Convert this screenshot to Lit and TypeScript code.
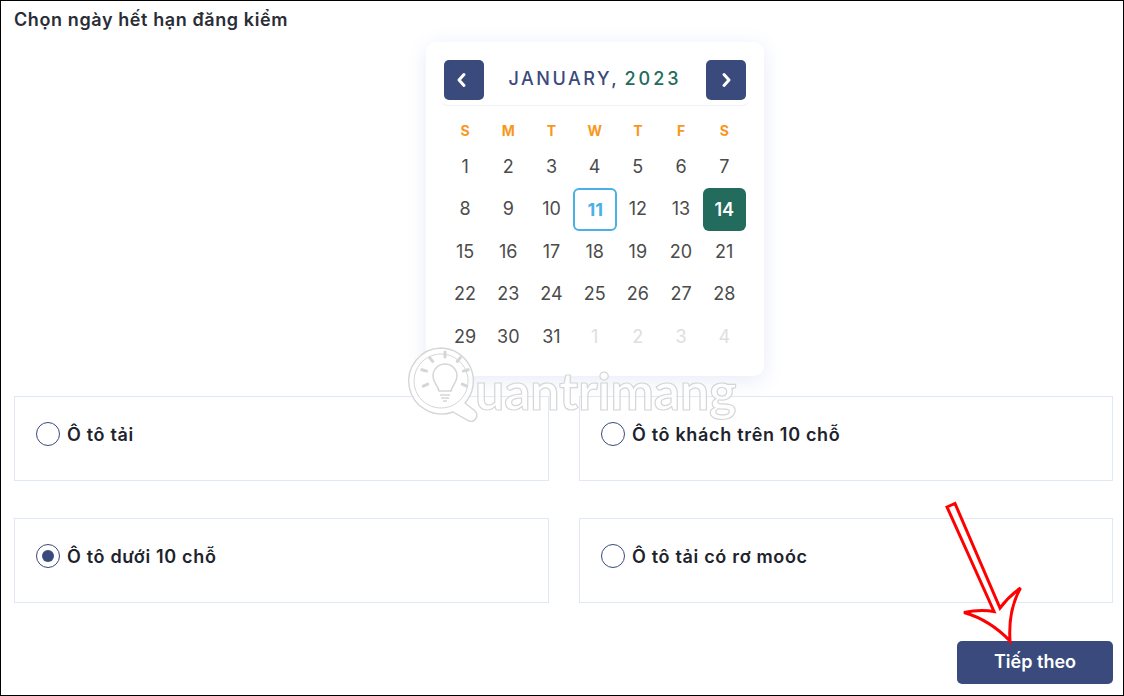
import { LitElement, html, css, svg } from "lit";
import { customElement } from "lit/decorators.js";

const WEEK = ["S", "M", "T", "W", "T", "F", "S"];
const DAYS: [number, string][] = [
  ...Array.from({ length: 31 }, (_, i) => [i + 1, ""] as [number, string]),
  [1, "off"], [2, "off"], [3, "off"], [4, "off"],
];
DAYS[10][1] = "today";
DAYS[13][1] = "sel";

const OPTIONS = [
  { label: "Ô tô tải", on: false },
  { label: "Ô tô khách trên 10 chỗ", on: false },
  { label: "Ô tô dưới 10 chỗ", on: true },
  { label: "Ô tô tải có rơ moóc", on: false },
];

@customElement("app-root")
export class AppRoot extends LitElement {
  static styles = css`
    :host {
      display: block;
      position: relative;
      width: 1124px;
      height: 696px;
      box-sizing: border-box;
      border: 1px solid #000;
      background: #fff;
      overflow: hidden;
      font-family: "Inter", "Noto Sans", sans-serif;
      color: #22262f;
    }
    .page {
      display: flex;
      flex-direction: column;
      height: 100%;
      box-sizing: border-box;
      padding: 8px 10px 11px 13px;
    }
    h1 {
      margin: 0;
      font-size: 18px;
      line-height: 22px;
      font-weight: 600;
      letter-spacing: 0.6px;
      color: #2a2d36;
    }
    .card {
      align-self: flex-start;
      margin: 11px 0 0 412px;
      width: 338px;
      height: 334px;
      box-sizing: border-box;
      padding: 18px;
      background: #fff;
      border-radius: 10px;
      box-shadow: 0 4px 20px rgba(70, 100, 210, 0.13);
    }
    .head {
      display: flex;
      align-items: center;
      justify-content: space-between;
      height: 46px;
      padding: 0 4px 6px;
      box-sizing: border-box;
      margin: 0 -4px;
      border-bottom: 1px solid #f0f1f4;
      border-radius: 0 0 8px 8px;
    }
    .nav {
      width: 40px;
      height: 40px;
      border-radius: 5px;
      background: #3a4a7d;
      display: flex;
      align-items: center;
      justify-content: center;
    }
    .month {
      font-size: 18px;
      font-weight: 500;
      letter-spacing: 2.55px;
      color: #3a4a7d;
      margin-top: -3px;
    }
    .year {
      color: #236b5c;
      letter-spacing: 3px;
      margin-left: -2px;
    }
    .grid {
      display: grid;
      grid-template-columns: repeat(7, 43.2px);
      grid-auto-rows: 42.5px;
      margin-left: -0.5px;
    }
    .week {
      display: grid;
      grid-template-columns: repeat(7, 43.2px);
      height: 39px;
      align-items: center;
      padding-top: 10px;
      box-sizing: border-box;
      margin-left: -0.5px;
      text-align: center;
      font-size: 14px;
      font-weight: 700;
      color: #f7981d;
    }
    .day {
      display: flex;
      align-items: center;
      justify-content: center;
      font-size: 18px;
      color: #4b4b4b;
      box-sizing: border-box;
      border-radius: 6px;
    }
    .off {
      color: #dedede;
    }
    .today {
      border: 2px solid #4bb0e6;
      color: #4bb0e6;
      font-weight: 700;
      margin: 0 -1px -1px 0;
    }
    .sel {
      background: #236b5c;
      color: #fff;
      font-weight: 600;
      margin-bottom: -1px;
    }
    .options {
      display: grid;
      grid-template-columns: 535px 534px;
      column-gap: 30px;
      row-gap: 37px;
      margin-top: 20px;
    }
    .opt {
      height: 85px;
      box-sizing: border-box;
      border: 1px solid #dfe8f3;
      display: flex;
      align-items: center;
      gap: 7px;
      padding: 0 0 9px 21px;
      font-size: 18px;
      font-weight: 600;
      letter-spacing: 0.68px;
      color: #20232c;
    }
    .radio {
      width: 24px;
      height: 24px;
      flex: none;
      box-sizing: border-box;
      border: 1px solid #3a4a7d;
      border-radius: 50%;
      display: flex;
      align-items: center;
      justify-content: center;
    }
    .dot {
      width: 12px;
      height: 12px;
      border-radius: 50%;
      background: #3a4a7d;
    }
    .actions {
      display: flex;
      justify-content: flex-end;
      margin-top: 38px;
    }
    .next {
      width: 156px;
      height: 43px;
      box-sizing: border-box;
      padding-bottom: 2px;
      border-radius: 5px;
      background: #3a4a7d;
      color: #fff;
      display: flex;
      align-items: center;
      justify-content: center;
      font-size: 18px;
      font-weight: 600;
    }
    .mark {
      position: absolute;
      left: 0;
      top: 0;
      pointer-events: none;
    }
    .wm {
      position: absolute;
      left: 474px;
      top: 349px;
      font-family: "Lato", "Noto Sans", sans-serif;
      font-size: 52px;
      font-weight: 700;
      line-height: 80px;
      letter-spacing: -0.2px;
      color: rgba(255, 255, 255, 0.75);
      -webkit-text-stroke: 1.2px #d6d6d6;
      pointer-events: none;
    }
  `;

  private chevron(left: boolean) {
    const d = left ? "M9 4.5 L4 10 L9 15.5" : "M7 4.5 L12 10 L7 15.5";
    return html`<svg width="18" height="19" viewBox="0 0 18 19" fill="none" stroke="#fff" stroke-width="3" stroke-linecap="round" stroke-linejoin="round"><path d=${d}></path></svg>`;
  }

  private watermarkBulb() {
    const rays = [-90, -50, -15, 25, 155, 195, 230].map((a) => {
      const r = (a * Math.PI) / 180;
      const x1 = 445 + Math.cos(r) * 19, y1 = 376 + Math.sin(r) * 19;
      const x2 = 445 + Math.cos(r) * 24, y2 = 376 + Math.sin(r) * 24;
      return svg`<line x1=${x1} y1=${y1} x2=${x2} y2=${y2} stroke-width="3" stroke-linecap="round"></line>`;
    });
    return html`<svg class="mark" width="1122" height="694" viewBox="1 1 1122 694" fill="none" stroke="#d6d6d6">
      <path d="M441 348 a33 33 0 1 0 12 64 l16 9 a6 6 0 0 0 6 -10 l-10 -8 a33 33 0 0 0 -24 -55 Z" fill="rgba(255,255,255,.75)" stroke-width="1.4"></path>
      <path d="M441 354 a27 27 0 1 0 0.1 0 Z" fill="#fff" stroke-width="1"></path>
      ${rays}
      <path d="M439 391 c-1 -6 -6 -8 -6 -15 a12 12 0 0 1 24 0 c0 7 -5 9 -6 15 Z" stroke-width="1.6"></path>
      <path d="M440 395 h10 M441 398 h8 M443 401 h4" stroke-width="1.6"></path>
    </svg>`;
  }

  render() {
    return html`
      <div class="page">
        <h1>Chọn ngày hết hạn đăng kiểm</h1>
        <div class="card">
          <div class="head">
            <div class="nav">${this.chevron(true)}</div>
            <div class="month">JANUARY, <span class="year">2023</span></div>
            <div class="nav">${this.chevron(false)}</div>
          </div>
          <div class="week">${WEEK.map((w) => html`<div>${w}</div>`)}</div>
          <div class="grid">
            ${DAYS.map(([n, c]) => html`<div class="day ${c}">${n}</div>`)}
          </div>
        </div>
        <div class="options">
          ${OPTIONS.map(
            (o) => html`<div class="opt">
              <span class="radio">${o.on ? html`<span class="dot"></span>` : ""}</span>
              <span>${o.label}</span>
            </div>`
          )}
        </div>
        <div class="actions"><div class="next">Tiếp theo</div></div>
      </div>
      ${this.watermarkBulb()}
      <div class="wm">uantrimang</div>
      <svg class="mark" width="1122" height="694" viewBox="1 1 1122 694" fill="none">
        <path d="M947 507 L955 503.5 L1000 608 Q1009 596 1020.5 588 Q1008 610 1010 641 Q990 620 964 612.5 Q980 609 994 611.5 Z" fill="#fff" stroke="#f00" stroke-width="3" stroke-linejoin="miter"></path>
      </svg>
    `;
  }
}
